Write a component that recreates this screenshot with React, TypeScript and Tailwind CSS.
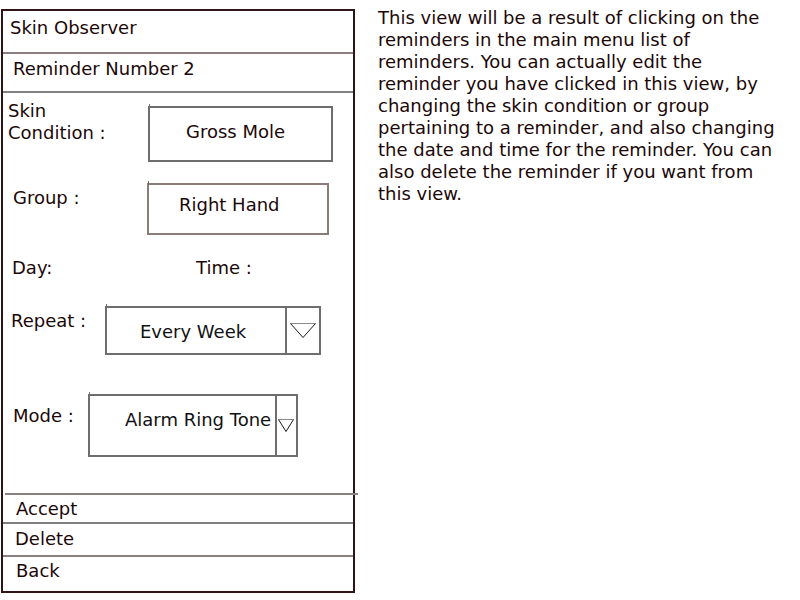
import React from 'react';

const FONT = { fontFamily: '"DejaVu Sans", Verdana, sans-serif' };

const DESCRIPTION = [
  'This view will be a result of clicking on the',
  'reminders in the main menu list of',
  'reminders. You can actually edit the',
  'reminder you have clicked in this view, by',
  'changing the skin condition or group',
  'pertaining to a reminder, and also changing',
  'the date and time for the reminder. You can',
  'also delete the reminder if you want from',
  'this view.',
];

function Tick() {
  return <span className="absolute -top-[4px] -left-[1px] w-px h-[4px] bg-[#6e6e6e]" />;
}

function DropArrow({ w, h }: { w: number; h: number }) {
  return (
    <svg width={w} height={h} viewBox={`0 0 ${w} ${h}`} className="block">
      <line x1="0.5" y1="0.5" x2={w - 0.5} y2="0.5" stroke="#8a8a8a" strokeWidth="1" />
      <polyline points={`0.5,0.5 ${w / 2},${h - 0.5} ${w - 0.5},0.5`} fill="none" stroke="#1a1a1a" strokeWidth="1" />
    </svg>
  );
}

export default function App() {
  return (
    <div className="w-[800px] h-[600px] bg-white flex items-start text-[18px] leading-[22px] text-[#1c0808]" style={FONT}>
      {/* phone frame */}
      <div className="mt-[9px] ml-[1px] w-[354px] h-[584px] border-2 border-[#2e1414] flex flex-col">
        <div className="h-[41px] pt-[6px] pl-[7px]">Skin Observer</div>
        <div className="h-[2px] bg-[#8a8080]" />
        <div className="h-[37px] pt-[4px] pl-[10px]">Reminder Number 2</div>
        <div className="h-[2px] bg-[#808080]" />

        {/* skin condition */}
        <div className="mt-[7px] flex items-start">
          <div className="w-[145px] pl-[5px]">
            Skin
            <br />
            Condition :
          </div>
          <div className="relative mt-[6px] w-[185px] h-[56px] border-2 border-[#6e6e6e] pt-[13px] pl-[36px]">
            <Tick />
            Gross Mole
          </div>
        </div>

        {/* group */}
        <div className="mt-[21px] flex items-start">
          <div className="w-[144px] pl-[10px] mt-[4px]">Group :</div>
          <div className="relative w-[182px] h-[52px] border-2 border-[#8c7c79] pt-[9px] pl-[30px]">
            <Tick />
            Right Hand
          </div>
        </div>

        {/* day / time */}
        <div className="mt-[22px] flex">
          <div className="w-[193px] pl-[9px]">Day:</div>
          <div>Time :</div>
        </div>

        {/* repeat */}
        <div className="mt-[27px] flex items-start">
          <div className="w-[102px] pl-[8px] mt-[4px]">Repeat :</div>
          <div className="relative w-[216px] h-[49px] border-2 border-[#6e6e6e] flex text-[#111]">
            <Tick />
            <div className="w-[180px] h-full border-r-2 border-[#6e6e6e] pt-[13px] pl-[33px]">Every Week</div>
            <div className="ml-[3px] mt-[15px]">
              <DropArrow w={26} h={15} />
            </div>
          </div>
        </div>

        {/* mode */}
        <div className="mt-[39px] flex items-start">
          <div className="w-[85px] pl-[10px] mt-[11px]">Mode :</div>
          <div className="relative w-[210px] h-[63px] border-2 border-[#6e6e6e] flex text-[#111]">
            <Tick />
            <div className="w-[187px] h-full border-r-2 border-[#6e6e6e] pt-[13px] pl-[35px]">Alarm Ring Tone</div>
            <div className="ml-[1px] mt-[23px]">
              <DropArrow w={16} h={13} />
            </div>
          </div>
        </div>

        {/* actions */}
        <div className="mt-[36px] ml-[2px] w-[353px] h-[2px] bg-[#8a8080]" />
        <div className="h-[27px] pt-[3px] pl-[13px]">Accept</div>
        <div className="h-[2px] bg-[#7f7f7f]" />
        <div className="h-[31px] pt-[4px] pl-[12px]">Delete</div>
        <div className="h-[2px] bg-[#8a8080]" />
        <div className="flex-1 pt-[3px] pl-[13px]">Back</div>
      </div>

      {/* description */}
      <p className="mt-[7px] ml-[23px] whitespace-nowrap">
        {DESCRIPTION.map((line) => (
          <React.Fragment key={line}>
            {line}
            <br />
          </React.Fragment>
        ))}
      </p>
    </div>
  );
}
